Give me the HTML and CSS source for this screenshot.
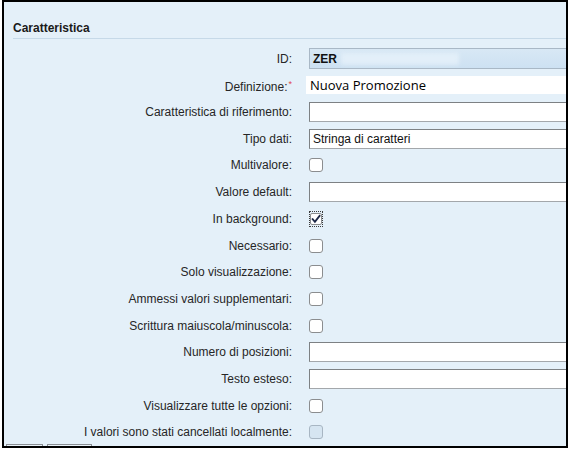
FILE: index.html
```html
<!DOCTYPE html>
<html lang="it">
<head>
<meta charset="utf-8">
<title>Caratteristica</title>
<link rel="stylesheet" href="styles.css">
</head>
<body>
<div class="frame">
  <div class="header">Caratteristica</div>
  <div class="form">
    <div class="lbl">ID:</div>
    <div class="cell"><div class="field field-id"><span class="id-val">ZER</span><span class="blur"></span></div></div>

    <div class="lbl">Definizione:<span class="req">*</span></div>
    <div class="cell"><div class="field field-def">Nuova Promozione</div></div>

    <div class="lbl">Caratteristica di riferimento:</div>
    <div class="cell"><div class="field"></div></div>

    <div class="lbl">Tipo dati:</div>
    <div class="cell"><div class="field">Stringa di caratteri</div></div>

    <div class="lbl">Multivalore:</div>
    <div class="cell"><span class="cb"></span></div>

    <div class="lbl">Valore default:</div>
    <div class="cell"><div class="field"></div></div>

    <div class="lbl">In background:</div>
    <div class="cell"><span class="focus"><span class="cb cb-checked"><svg class="tick" width="10" height="10" viewBox="0 0 10 10"><path d="M1.6 5.2 L3.9 7.8 L8.6 1.8" fill="none" stroke="#1c2746" stroke-width="1.8" stroke-linecap="square"/></svg></span></span></div>

    <div class="lbl">Necessario:</div>
    <div class="cell"><span class="cb"></span></div>

    <div class="lbl">Solo visualizzazione:</div>
    <div class="cell"><span class="cb"></span></div>

    <div class="lbl">Ammessi valori supplementari:</div>
    <div class="cell"><span class="cb"></span></div>

    <div class="lbl">Scrittura maiuscola/minuscola:</div>
    <div class="cell"><span class="cb"></span></div>

    <div class="lbl">Numero di posizioni:</div>
    <div class="cell"><div class="field"></div></div>

    <div class="lbl">Testo esteso:</div>
    <div class="cell"><div class="field"></div></div>

    <div class="lbl">Visualizzare tutte le opzioni:</div>
    <div class="cell"><span class="cb"></span></div>

    <div class="lbl">I valori sono stati cancellati localmente:</div>
    <div class="cell"><span class="cb cb-disabled"></span></div>
  </div>
  <div class="buttons">
    <span class="btn btn-a"></span>
    <span class="btn btn-b"></span>
  </div>
</div>
</body>
</html>
```

FILE: styles.css
```css
html, body {
  margin: 0;
  padding: 0;
  background: #ffffff;
}

body {
  font-family: "Liberation Sans", Arial, sans-serif;
  font-size: 12px;
  color: #222222;
}

.frame {
  margin-left: 2px;
  width: 562px;
  height: 444px;
  border: 2px solid #000000;
  background: #e4f0f9;
  overflow: hidden;
}

.header {
  margin-left: 9px;
  padding-top: 19px;
  padding-bottom: 3px;
  line-height: 14px;
  font-weight: bold;
  color: #1a1a1a;
  border-bottom: 1px solid #c6d9e8;
}

.form {
  display: grid;
  grid-template-columns: 288px 1fr;
  column-gap: 17px;
  grid-auto-rows: 26.7px;
  align-items: center;
  padding-top: 6.4px;
}

.lbl {
  text-align: right;
  white-space: nowrap;
  line-height: 14px;
  color: #262626;
}

.req {
  color: #e04650;
  font-size: 9px;
  vertical-align: 4px;
  margin-left: 1px;
}

.cell {
  display: flex;
  align-items: center;
  min-width: 0;
}

.field {
  box-sizing: border-box;
  width: 280px;
  flex: none;
  height: 20px;
  border: 1px solid #a3a7ab;
  border-top-color: #7d8184;
  border-left-color: #7d8184;
  background: #ffffff;
  padding-left: 3px;
  line-height: 18px;
  color: #111111;
  white-space: nowrap;
  display: flex;
  align-items: center;
}

.field-id {
  height: 21px;
  border: 1px solid #a9b8c6;
  background: linear-gradient(#d8e8f5, #cde1f2);
}

.id-val {
  font-weight: bold;
  color: #111111;
}

.blur {
  display: inline-block;
  width: 118px;
  height: 12px;
  margin-left: 4px;
  background: rgba(240, 247, 253, 0.55);
  filter: blur(2px);
}

.field-def {
  margin-left: -3px;
  height: 18px;
  border: none;
  background: #ffffff;
  padding-left: 4px;
  font-family: "Open Sans", "Noto Sans", sans-serif;
  font-size: 13px;
  color: #000000;
}

.cb {
  box-sizing: border-box;
  display: inline-block;
  width: 14px;
  height: 14px;
  border: 1px solid #8b8d8f;
  border-radius: 3px;
  background: #ffffff;
}

.cb-disabled {
  border-color: #a8b6c3;
  background: #d6e5f1;
}

.focus {
  box-sizing: border-box;
  display: inline-flex;
  align-items: center;
  justify-content: center;
  width: 14px;
  height: 16px;
  border: 1px dotted #3a3a3a;
}

.cb-checked {
  width: 12px;
  height: 12px;
  border-radius: 2px;
  border-color: #8b8d8f;
  display: flex;
  align-items: center;
  justify-content: center;
}

.tick {
  display: block;
}

.buttons {
  display: flex;
  gap: 4px;
  margin-top: -1.5px;
  padding-left: 2px;
}

.btn {
  box-sizing: border-box;
  display: inline-block;
  height: 12px;
  border: 1px solid #8a8f94;
  background: #e9f2f9;
}

.btn-a {
  width: 37px;
}

.btn-b {
  width: 45px;
}
```
